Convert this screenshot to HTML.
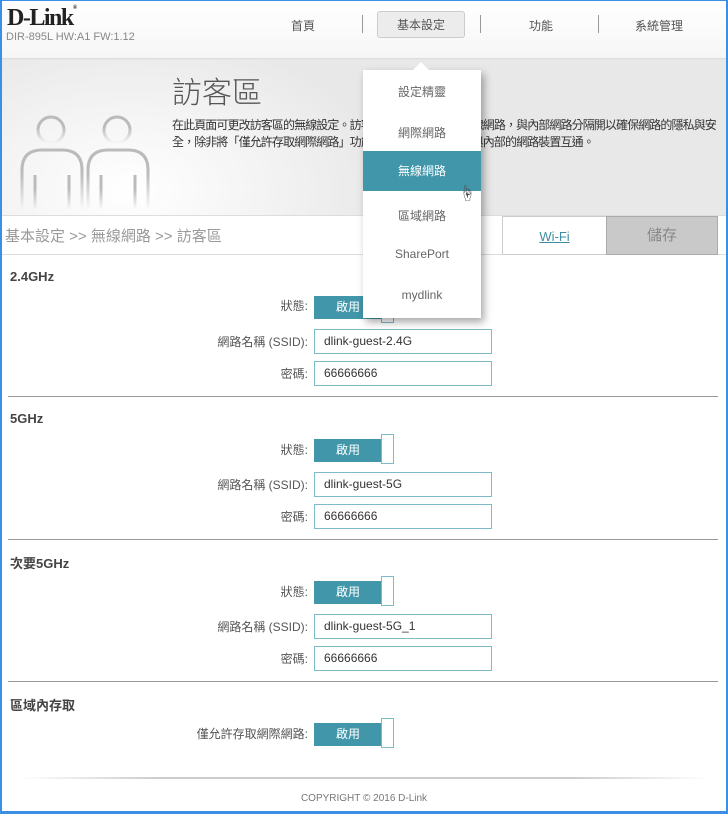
<!DOCTYPE html>
<html><head><meta charset="utf-8"><style>
*{margin:0;padding:0;box-sizing:border-box}
body{width:728px;height:814px;overflow:hidden;background:#fff;font-family:"Liberation Sans","Noto Sans CJK TC",sans-serif;position:relative;color:#444}
.frame{position:absolute;inset:0;border:2px solid #3b8fe6;border-top-width:1px;border-bottom-width:3px;pointer-events:none;z-index:50}
.abs{position:absolute}
.hdr{left:0;top:0;width:728px;height:59px;background:linear-gradient(#fff,#f6f6f6);border-bottom:1px solid #ddd;box-shadow:0 2px 3px rgba(0,0,0,.12)}
.logo{left:7px;top:5px;font-family:"Liberation Serif",serif;font-weight:bold;font-size:24px;color:#222;letter-spacing:-1.5px}
.sub{left:6px;top:31px;font-size:11px;color:#888}
.nav{font-size:12px;color:#555;top:17px}
.sep{top:15px;width:1px;height:18px;background:#999}
.tab{left:377px;top:11px;width:88px;height:27px;background:#ececec;border:1px solid #ccc;border-radius:3px;font-size:12px;color:#555;text-align:center;line-height:27px}
.ban{left:0;top:60px;width:728px;height:156px;background:radial-gradient(ellipse 260px 160px at 130px 130px,#fff 0%,#f4f4f4 50%,#e8e8e8 100%)}
.title{left:172px;top:68px;font-size:30px;color:#555;font-family:"Noto Sans CJK TC",sans-serif;font-weight:300}
.desc{left:172px;top:117px;font-size:12px;line-height:17px;color:#333;width:552px;letter-spacing:-0.9px}
.bc{left:0;top:215px;width:728px;height:40px;background:#fff;border-top:1px solid #ddd;border-bottom:1px solid #ddd}
.bct{left:5px;top:225px;font-size:15px;color:#999}
.wifi{left:502px;top:216px;width:105px;height:39px;border:1px solid #ccc;background:#fff;text-align:center;line-height:39px;font-size:13px;color:#3e8ea3;text-decoration:underline}
.save{left:606px;top:216px;width:112px;height:39px;background:#c9c9c9;border:1px solid #aaa;text-align:center;line-height:38px;font-size:15px;color:#888}
.dd{left:363px;top:70px;width:118px;height:248px;background:#fff;box-shadow:3px 4px 8px rgba(0,0,0,.35);z-index:10}
.arr{left:413px;top:62px;width:0;height:0;border-left:8px solid transparent;border-right:8px solid transparent;border-bottom:8px solid #fff;z-index:11}
.di{position:absolute;left:0;width:118px;text-align:center;font-size:12px;color:#666}
.hl{top:81px;height:40px;background:#4196aa;color:#fff;line-height:40px}
.sec{left:10px;font-size:13px;font-weight:bold;color:#444}
.lbl{width:300px;text-align:right;font-size:12px;color:#555;left:8px}
.inp{left:314px;width:178px;height:25px;border:1px solid #7dbbc8;font-size:12px;color:#333;padding-left:9px;line-height:23px}
.tg{left:314px;width:68px;height:23px;background:#4196aa;color:#fff;font-size:12px;text-align:center;line-height:23px}
.kn{left:381px;width:13px;height:30px;border:1px solid #7dbbc8;background:#fff}
.hr{left:8px;width:710px;height:1px;background:#999}
</style></head><body>
<div class="frame"></div>
<div class="abs hdr"></div>
<div class="abs logo">D-Link<span style="font-size:6px;vertical-align:top">®</span></div>
<div class="abs sub">DIR-895L HW:A1 FW:1.12</div>
<div class="abs nav" style="left:291px">首頁</div>
<div class="abs sep" style="left:362px"></div>
<div class="abs tab">基本設定</div>
<div class="abs sep" style="left:480px"></div>
<div class="abs nav" style="left:529px">功能</div>
<div class="abs sep" style="left:598px"></div>
<div class="abs nav" style="left:635px">系統管理</div>

<div class="abs ban"></div>
<svg class="abs" style="left:15px;top:110px" width="140" height="100" viewBox="0 0 140 100">
<defs><linearGradient id="f" x1="0" y1="0" x2="0" y2="1"><stop offset="0.4" stop-color="#bbb"/><stop offset="1" stop-color="#bbb" stop-opacity="0"/></linearGradient></defs>
<g fill="none" stroke="url(#f)" stroke-width="3">
<circle cx="36" cy="20" r="13"/><circle cx="102" cy="20" r="13"/>
<path d="M7 100 V60 Q7 40 27 40 H47 Q67 40 67 60 V100"/>
<path d="M73 100 V60 Q73 40 93 40 H113 Q133 40 133 60 V100"/>
<path d="M20 65 V100 M54 65 V100 M86 65 V100 M120 65 V100"/>
</g></svg>
<div class="abs title">訪客區</div>
<div class="abs desc">在此頁面可更改訪客區的無線設定。訪客區提供訪客專用的無線網路，與內部網路分隔開以確保網路的隱私與安全，除非將「僅允許存取網際網路」功能停用，否則訪客無法與內部的網路裝置互通。</div>

<div class="abs bc"></div>
<div class="abs bct">基本設定 &gt;&gt; 無線網路 &gt;&gt; 訪客區</div>
<div class="abs wifi">Wi-Fi</div>
<div class="abs save">儲存</div>

<div class="abs arr"></div>
<div class="abs dd">
<div class="di" style="top:13px">設定精靈</div>
<div class="di" style="top:54px">網際網路</div>
<div class="di hl">無線網路</div>
<div class="di" style="top:137px">區域網路</div>
<div class="di" style="top:177px">SharePort</div>
<div class="di" style="top:218px">mydlink</div>
<div style="position:absolute;left:96px;top:110px;font-size:16px">☝</div>
</div>

<div class="abs sec" style="top:269px">2.4GHz</div>
<div class="abs lbl" style="top:297px">狀態:</div>
<div class="abs tg" style="top:296px">啟用</div>
<div class="abs kn" style="top:293px"></div>
<div class="abs lbl" style="top:333px">網路名稱 (SSID):</div>
<div class="abs inp" style="top:329px">dlink-guest-2.4G</div>
<div class="abs lbl" style="top:365px">密碼:</div>
<div class="abs inp" style="top:361px">66666666</div>
<div class="abs hr" style="top:396px"></div>

<div class="abs sec" style="top:411px">5GHz</div>
<div class="abs lbl" style="top:441px">狀態:</div>
<div class="abs tg" style="top:439px">啟用</div>
<div class="abs kn" style="top:434px"></div>
<div class="abs lbl" style="top:476px">網路名稱 (SSID):</div>
<div class="abs inp" style="top:472px">dlink-guest-5G</div>
<div class="abs lbl" style="top:508px">密碼:</div>
<div class="abs inp" style="top:504px">66666666</div>
<div class="abs hr" style="top:539px"></div>

<div class="abs sec" style="top:553px">次要5GHz</div>
<div class="abs lbl" style="top:583px">狀態:</div>
<div class="abs tg" style="top:581px">啟用</div>
<div class="abs kn" style="top:576px"></div>
<div class="abs lbl" style="top:618px">網路名稱 (SSID):</div>
<div class="abs inp" style="top:614px">dlink-guest-5G_1</div>
<div class="abs lbl" style="top:650px">密碼:</div>
<div class="abs inp" style="top:646px">66666666</div>
<div class="abs hr" style="top:681px"></div>

<div class="abs sec" style="top:695px">區域內存取</div>
<div class="abs lbl" style="top:725px">僅允許存取網際網路:</div>
<div class="abs tg" style="top:723px">啟用</div>
<div class="abs kn" style="top:718px"></div>

<div class="abs" style="left:20px;top:777px;width:690px;height:2px;background:linear-gradient(90deg,rgba(200,200,200,0),#ccc 20%,#ccc 80%,rgba(200,200,200,0))"></div>
<div class="abs" style="left:0;top:793px;width:728px;text-align:center;font-size:10px;color:#777">COPYRIGHT © 2016 D-Link</div>
</body></html>
